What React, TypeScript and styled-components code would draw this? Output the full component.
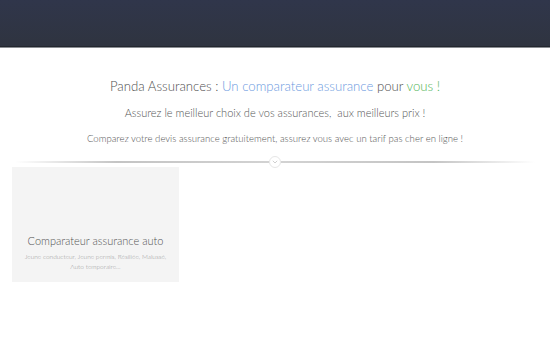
import React from 'react';
import styled, { createGlobalStyle } from 'styled-components';

const GlobalStyle = createGlobalStyle`
  html, body {
    margin: 0;
    padding: 0;
    background: #ffffff;
    font-family: Lato, "Open Sans", sans-serif;
  }
`;

const Header = styled.header`
  height: 46px;
  background: linear-gradient(to bottom, #30364b 0%, #2f3440 100%);
  border-bottom: 1px solid #23272f;
  box-shadow: 0 1px 0 #8a8d92;
`;

const Intro = styled.section`
  display: flex;
  flex-direction: column;
  align-items: center;
  padding-top: 31px;
  text-align: center;
`;

const Title = styled.h1`
  margin: 0;
  font-size: 13.2px;
  font-weight: 300;
  color: #4f4f4f;
`;

const Accent = styled.span<{ $color: string }>`
  color: ${(p) => p.$color};
`;

const Lead = styled.p<{ $size: number; $top: number }>`
  margin: ${(p) => p.$top}px 0 0;
  font-size: ${(p) => p.$size}px;
  font-weight: 300;
  color: #555;
`;

const Divider = styled.div`
  display: flex;
  align-items: center;
  justify-content: center;
  margin: 12px 15px 0;
  height: 12px;
`;

const Line = styled.div`
  flex: 1;
  height: 2px;
  background: linear-gradient(to right, rgba(190, 190, 190, 0) 0%, #c4c4c4 40%, #d2d2d2 100%);
  &:last-child {
    background: linear-gradient(to left, rgba(190, 190, 190, 0) 0%, #c4c4c4 40%, #d2d2d2 100%);
  }
`;

const Knob = styled.div`
  width: 10px;
  height: 10px;
  border-radius: 50%;
  border: 1px solid #e6e6e6;
  background: #fff;
  display: flex;
  align-items: center;
  justify-content: center;
`;

const Grid = styled.div`
  display: grid;
  grid-template-columns: 167px;
  padding: 0 12px;
  margin-top: -1px;
`;

const Card = styled.div`
  height: 115px;
  background: #f4f4f4;
  display: flex;
  flex-direction: column;
  justify-content: flex-end;
  align-items: center;
  padding: 0 2px 10px;
  box-sizing: border-box;
  text-align: center;
`;

const CardTitle = styled.h2`
  margin: 0 0 5px;
  font-size: 11px;
  font-weight: 300;
  color: #555;
`;

const CardText = styled.p`
  margin: 0;
  font-size: 6.5px;
  line-height: 10px;
  font-weight: 300;
  color: #999;
  white-space: nowrap;
`;

export default function App() {
  return (
    <>
      <GlobalStyle />
      <Header />
      <Intro>
        <Title>
          Panda Assurances : <Accent $color="#6c9be0">Un comparateur assurance</Accent> pour{' '}
          <Accent $color="#4fb454">vous !</Accent>
        </Title>
        <Lead $size={11} $top={12}>Assurez le meilleur choix de vos assurances,&nbsp; aux meilleurs prix !</Lead>
        <Lead $size={9.6} $top={14}>Comparez votre devis assurance gratuitement, assurez vous avec un tarif pas cher en ligne !</Lead>
      </Intro>
      <Divider>
        <Line />
        <Knob>
          <svg width="6" height="4" viewBox="0 0 6 4">
            <path d="M0.8 0.8 L3 3 L5.2 0.8" fill="none" stroke="#c9c9c9" strokeWidth="0.9" />
          </svg>
        </Knob>
        <Line />
      </Divider>
      <Grid>
        <Card>
          <CardTitle>Comparateur assurance auto</CardTitle>
          <CardText>
            Jeune conducteur, Jeune permis, Résiliée, Malussé,
            <br />
            Auto temporaire...
          </CardText>
        </Card>
      </Grid>
    </>
  );
}
